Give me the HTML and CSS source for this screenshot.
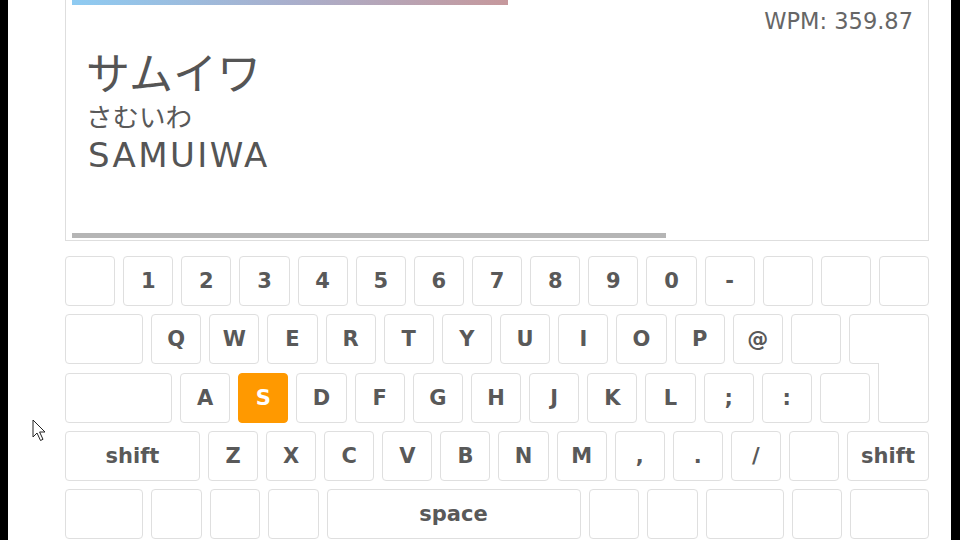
FILE: index.html
```html
<!DOCTYPE html>
<html lang="ja">
<head>
<meta charset="utf-8">
<title>Typing</title>
<link rel="stylesheet" href="styles.css">
</head>
<body>
<div class="screen">
  <div class="app">
    <section class="panel">
      <div class="progress"></div>
      <div class="wpm">WPM: 359.87</div>
      <div class="word">
        <div class="kana">サムイワ</div>
        <div class="hira">さむいわ</div>
        <div class="roma">SAMUIWA</div>
      </div>
      <div class="timebar"></div>
    </section>
    <div class="keyboard">
      <div class="row">
        <div class="key"></div><div class="key">1</div><div class="key">2</div><div class="key">3</div><div class="key">4</div><div class="key">5</div><div class="key">6</div><div class="key">7</div><div class="key">8</div><div class="key">9</div><div class="key">0</div><div class="key">-</div><div class="key"></div><div class="key"></div><div class="key"></div>
      </div>
      <div class="row">
        <div class="key key-tab"></div><div class="key">Q</div><div class="key">W</div><div class="key">E</div><div class="key">R</div><div class="key">T</div><div class="key">Y</div><div class="key">U</div><div class="key">I</div><div class="key">O</div><div class="key">P</div><div class="key">@</div><div class="key"></div><div class="key key-enter"></div>
      </div>
      <div class="row">
        <div class="key key-caps"></div><div class="key">A</div><div class="key active">S</div><div class="key">D</div><div class="key">F</div><div class="key">G</div><div class="key">H</div><div class="key">J</div><div class="key">K</div><div class="key">L</div><div class="key">;</div><div class="key">:</div><div class="key"></div><div class="key key-enter-bottom"></div>
      </div>
      <div class="row">
        <div class="key key-shift-l">shift</div><div class="key">Z</div><div class="key">X</div><div class="key">C</div><div class="key">V</div><div class="key">B</div><div class="key">N</div><div class="key">M</div><div class="key">,</div><div class="key">.</div><div class="key">/</div><div class="key"></div><div class="key key-shift-r">shift</div>
      </div>
      <div class="row">
        <div class="key key-wide"></div><div class="key"></div><div class="key"></div><div class="key"></div><div class="key key-space">space</div><div class="key"></div><div class="key"></div><div class="key key-wide"></div><div class="key"></div><div class="key key-wide2"></div>
      </div>
    </div>
  </div>
  <svg class="cursor" width="15" height="23" viewBox="0 0 15 23"><path d="M1 1 L1 18 L5 14 L8.5 21.5 L11 20.3 L7.6 13 L13 13 Z" fill="#fff" stroke="#222" stroke-width="1" stroke-linejoin="round"/></svg>
</div>
</body>
</html>
```
FILE: styles.css
```css
html, body {
  margin: 0;
  padding: 0;
  background: #000;
}
.screen {
  position: relative;
  width: 943px;
  height: 540px;
  margin-left: 8px;
  background: #fff;
  overflow: hidden;
  font-family: "DejaVu Sans", "Noto Sans CJK JP", sans-serif;
  color: #595959;
}
.app {
  margin-left: 57px;
  width: 864px;
}
.panel {
  box-sizing: border-box;
  margin-top: -1px;
  height: 242px;
  border: 1px solid #dedede;
  padding: 0 6px;
  display: flex;
  flex-direction: column;
}
.progress {
  width: 436px;
  height: 5px;
  background: linear-gradient(to right, #8ecbf2, #a9afcc 50%, #c6989c);
}
.wpm {
  margin-top: 3px;
  padding-right: 9px;
  text-align: right;
  font-size: 22.5px;
  line-height: 26px;
  color: #666;
}
.word {
  flex: 1;
  margin-top: 11px;
  padding-left: 14px;
}
.kana {
  font-family: "Noto Sans CJK JP", sans-serif;
  font-size: 44px;
  line-height: 52px;
  color: #555;
}
.hira {
  margin-top: 3px;
  font-family: "Noto Sans CJK JP", sans-serif;
  font-size: 26.5px;
  line-height: 31px;
  color: #595959;
}
.roma {
  margin-top: 4px;
  margin-left: 2px;
  font-size: 34px;
  line-height: 40px;
  letter-spacing: 2.4px;
  color: #555;
}
.timebar {
  width: 594px;
  height: 5px;
  margin-bottom: 2px;
  background: #b5b5b5;
}
.keyboard {
  margin-top: 15px;
  display: flex;
  flex-direction: column;
  gap: 8.25px;
}
.row {
  display: flex;
  gap: 8px;
  height: 50px;
}
.key {
  box-sizing: border-box;
  flex: 1 1 0;
  display: flex;
  align-items: center;
  justify-content: center;
  border: 1px solid #dfdfdf;
  border-radius: 4px;
  background: #fff;
  font-weight: bold;
  font-size: 21px;
  color: #595959;
}
.key.active {
  background: #ff9900;
  border-color: #ff9900;
  color: #fff;
}
.key-tab, .key-wide { flex: 0 0 78px; }
.key-wide2 { flex: 0 0 79px; }
.key-caps { flex: 0 0 107px; }
.key-enter {
  flex: 0 0 80px;
  border-bottom-right-radius: 0;
}
.key-enter-bottom {
  flex: 0 0 51px;
  margin-top: -9.25px;
  border-top: none;
  border-radius: 0 0 4px 4px;
}
.key-shift-l { flex: 0 0 135px; }
.key-shift-r { flex: 0 0 82px; }
.key-space { flex: 0 0 254px; }
.cursor {
  position: absolute;
  left: 24px;
  top: 419px;
}
```
